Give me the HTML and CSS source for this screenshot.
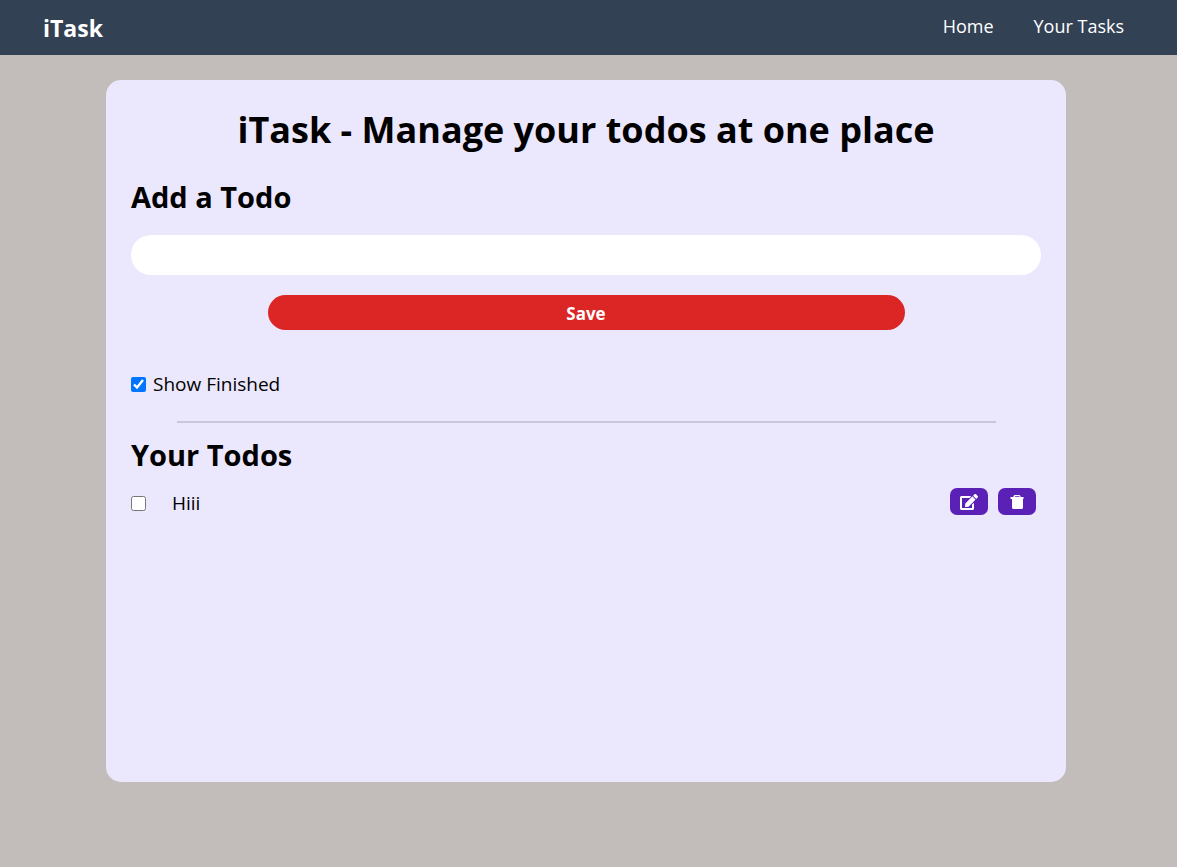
FILE: index.html
```html
<!DOCTYPE html>
<html lang="en">
<head>
<meta charset="utf-8">
<meta name="viewport" content="width=device-width, initial-scale=1">
<title>iTask</title>
<link rel="stylesheet" href="styles.css">
</head>
<body>
<nav class="navbar">
  <span class="brand">iTask</span>
  <ul class="nav-links">
    <li><a href="#home">Home</a></li>
    <li><a href="#tasks">Your Tasks</a></li>
  </ul>
</nav>
<main class="page">
  <div class="card">
    <h1 class="title">iTask - Manage your todos at one place</h1>
    <form class="add-todo">
      <h2 class="heading"><label for="todo">Add a Todo</label></h2>
      <input class="todo-input" id="todo" type="text">
      <button class="save" type="button">Save</button>
    </form>
    <div class="filter">
      <input class="check" id="finished" type="checkbox" checked>
      <label for="finished">Show Finished</label>
    </div>
    <hr class="divider">
    <h2 class="heading">Your Todos</h2>
    <ul class="todos">
      <li class="todo">
        <div class="todo-main">
          <input class="check" id="todo-1" type="checkbox">
          <label for="todo-1">Hiii</label>
        </div>
        <div class="actions">
          <button class="action" type="button" aria-label="Edit">
            <svg class="icon" viewBox="0 0 576 512" fill="currentColor"><path d="M402.600 83.200l90.200 90.200c3.800 3.800 3.800 10 0 13.800L274.400 405.600l-92.800 10.300c-12.400 1.400-22.900-9.100-21.500-21.500l10.300-92.800L388.800 83.200c3.800-3.800 10-3.800 13.800 0zm162-22.900l-48.800-48.800c-15.200-15.200-39.900-15.200-55.200 0l-35.400 35.400c-3.800 3.800-3.800 10 0 13.800l90.200 90.200c3.800 3.800 10 3.800 13.800 0l35.400-35.400c15.200-15.300 15.200-40 0-55.200zM384 346.200V448H64V128h229.800c3.200 0 6.200-1.300 8.500-3.500l40-40c7.600-7.600 2.200-20.500-8.500-20.500H48C21.500 64 0 85.500 0 112v352c0 26.500 21.500 48 48 48h352c26.500 0 48-21.500 48-48V306.200c0-10.700-12.900-16-20.500-8.500l-40 40c-2.200 2.300-3.500 5.300-3.500 8.500z"/></svg>
          </button>
          <button class="action" type="button" aria-label="Delete">
            <svg class="icon" viewBox="0 0 18 16" fill="currentColor"><path fill-rule="evenodd" d="M2.500 3H5.500V2L6.500 1h5l1 1v1h3v2H15v8.500a1.500 1.500 0 0 1-1.500 1.500h-8A1.500 1.500 0 0 1 4 13.500V5H2.500zM7 3h4.500v-.8H7z"/></svg>
          </button>
        </div>
      </li>
    </ul>
  </div>
</main>
</body>
</html>
```
FILE: styles.css
```css
* {
  box-sizing: border-box;
  margin: 0;
  padding: 0;
}

body {
  background: #c2bcbb;
  color: #000;
  font: 19px/28px "Segoe UI", "Open Sans", "Noto Sans", sans-serif;
}

.navbar {
  display: flex;
  justify-content: space-between;
  align-items: flex-start;
  padding: 11px 53px 9px 43px;
  background: #334155;
  color: #fff;
}

.brand {
  font-size: 23px;
  font-weight: 700;
  line-height: 35px;
}

.nav-links {
  display: flex;
  gap: 40px;
  list-style: none;
  font-size: 18px;
  line-height: 30px;
}

.nav-links a {
  color: inherit;
  text-decoration: none;
}

.page {
  padding: 25px 111px 85px 106px;
}

.card {
  min-height: 81vh;
  padding: 25px;
  border-radius: 15px;
  background: #ebe7fd;
}

.title {
  font-size: 36px;
  font-weight: 700;
  line-height: 50px;
  text-align: center;
}

.add-todo {
  display: flex;
  flex-direction: column;
  margin: 22px 0 40px;
}

.heading {
  font-size: 29px;
  font-weight: 700;
  line-height: 40px;
}

.todo-input {
  width: 100%;
  height: 40px;
  margin: 18px 0 20px;
  padding: 5px 20px;
  border: 0;
  border-radius: 20px;
  background: #fff;
  font: inherit;
}

.save {
  width: 70%;
  margin: 0 auto;
  padding: 6px 20px 4px;
  border: 0;
  border-radius: 18px;
  background: #dc2626;
  color: #fff;
  font: 700 17px/25px "Segoe UI", "Open Sans", "Noto Sans", sans-serif;
}

.filter {
  display: flex;
  align-items: center;
  gap: 7px;
}

.check {
  width: 15px;
  height: 15px;
  accent-color: #0075ff;
}

.divider {
  width: 90%;
  height: 2px;
  margin: 23px auto 12px;
  border: 0;
  background: #cac5dc;
}

.todos {
  list-style: none;
}

.todo {
  display: flex;
  justify-content: space-between;
  align-items: flex-start;
  padding: 13px 5px 0 0;
}

.todo-main {
  display: flex;
  align-items: center;
  gap: 26px;
  line-height: 30px;
}

.actions {
  display: flex;
  gap: 10px;
}

.action {
  display: flex;
  align-items: center;
  justify-content: center;
  width: 38px;
  height: 27px;
  border: 0;
  border-radius: 7px;
  background: #5b21b6;
  color: #fff;
}

.icon {
  width: 18px;
  height: 16px;
}
```
